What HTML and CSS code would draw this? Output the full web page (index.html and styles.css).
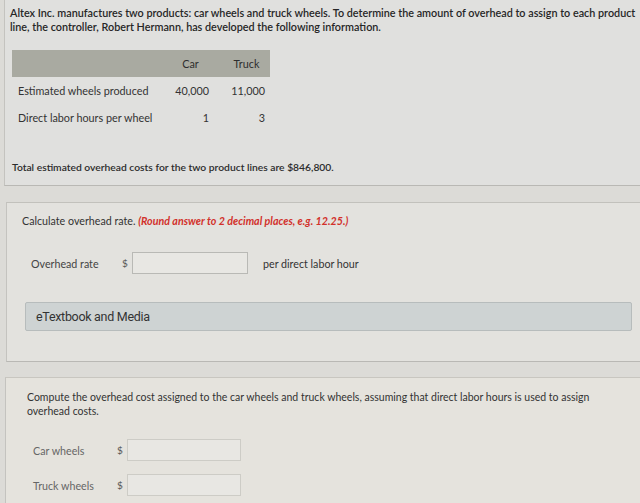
FILE: index.html
```html
<!DOCTYPE html>
<html>
<head>
<meta charset="utf-8">
<link rel="stylesheet" href="styles.css">
</head>
<body>
<div class="page">
  <section class="card card-info">
    <p class="intro">Altex Inc. manufactures two products: car wheels and truck wheels. To determine the amount of overhead to assign to each product line, the controller, Robert Hermann, has developed the following information.</p>
    <table class="data">
      <thead>
        <tr><th class="lbl"></th><th class="c-car">Car</th><th class="c-truck">Truck</th></tr>
      </thead>
      <tbody>
        <tr><td class="lbl">Estimated wheels produced</td><td class="n-car">40,000</td><td class="n-truck">11,000</td></tr>
        <tr><td class="lbl">Direct labor hours per wheel</td><td class="n-car">1</td><td class="n-truck">3</td></tr>
      </tbody>
    </table>
    <p class="total">Total estimated overhead costs for the two product lines are $846,800.</p>
  </section>

  <section class="card card-q1">
    <p class="question">Calculate overhead rate. <span class="hint">(Round answer to 2 decimal places, e.g. 12.25.)</span></p>
    <div class="answer-row row-rate">
      <span class="a-label label-rate">Overhead rate</span>
      <span class="dollar">$</span>
      <span class="input input-rate"></span>
      <span class="unit">per direct labor hour</span>
    </div>
    <div class="media-bar">eTextbook and Media</div>
  </section>

  <section class="card card-q2">
    <p class="question2">Compute the overhead cost assigned to the car wheels and truck wheels, assuming that direct labor hours is used to assign overhead costs.</p>
    <div class="answer-row row-car">
      <span class="a-label label-wheels">Car wheels</span>
      <span class="dollar">$</span>
      <span class="input input-wheels"></span>
    </div>
    <div class="answer-row row-truck">
      <span class="a-label label-wheels">Truck wheels</span>
      <span class="dollar">$</span>
      <span class="input input-wheels"></span>
    </div>
  </section>
</div>
</body>
</html>
```

FILE: styles.css
```css
html, body {
  margin: 0;
  padding: 0;
}
body {
  background: #dcdbd7;
  font-family: Lato, "Open Sans", Arial, sans-serif;
  color: #2a2a2a;
  width: 640px;
  height: 503px;
  overflow: hidden;
}
.page {
  display: flex;
  flex-direction: column;
}
.card {
  border-left: 1px solid #c4c3bf;
  border-bottom: 1px solid #b9b8b4;
}
.card-info {
  margin-left: 4px;
  background: #e0e0de;
  padding: 6px 0 11px 5px;
}
.intro {
  margin: 0;
  font-size: 10.8px;
  line-height: 14px;
  font-weight: 600;
  color: #262626;
}
.data {
  margin: 16px 0 0 2px;
  border-collapse: collapse;
  font-size: 10.8px;
  color: #333;
}
.data th {
  background: #a9aaa1;
  height: 27px;
  padding: 0;
  font-weight: 400;
  color: #2e2e2e;
}
.data td {
  height: 27px;
  padding: 0;
}
.data .lbl {
  width: 156px;
  padding-left: 6px;
  text-align: left;
  box-sizing: border-box;
}
.data .c-car {
  width: 45px;
  text-align: center;
}
.data .c-truck {
  width: 57px;
  text-align: center;
  padding-left: 10px;
  box-sizing: border-box;
}
.data .n-car {
  text-align: right;
  padding-right: 4px;
}
.data .n-truck {
  text-align: right;
  padding-right: 5px;
}
.total {
  margin: 29px 0 0 2px;
  font-size: 10.3px;
  line-height: 14px;
  font-weight: 600;
  color: #2c2c2c;
}
.card-q1 {
  margin: 16px 0 0 6px;
  border-top: 1px solid #c2c1bc;
  background: #e3e2de;
  padding: 11px 8px 30px 15px;
}
.question {
  margin: 0;
  font-size: 10.7px;
  line-height: 14px;
  color: #333;
}
.hint {
  color: #d2312b;
  font-weight: 700;
  font-style: italic;
}
.answer-row {
  display: flex;
  align-items: center;
  font-size: 10.7px;
  color: #444;
}
.row-rate {
  margin: 24px 0 0 9px;
}
.label-rate {
  width: 91px;
}
.dollar {
  width: 10px;
  font-size: 10px;
  color: #555;
}
.input {
  display: block;
  background: #e8e7e3;
  border: 1px solid #b9b9b5;
  box-sizing: border-box;
}
.input-rate {
  width: 116px;
  height: 22px;
}
.unit {
  margin-left: 15px;
  color: #333;
}
.media-bar {
  margin: 28px 0 0 3px;
  height: 29px;
  box-sizing: border-box;
  background: #ced3d3;
  border: 1px solid #b7bcbc;
  border-radius: 2px;
  padding: 0 10px;
  display: flex;
  align-items: center;
  font-family: Roboto, Arial, sans-serif;
  font-size: 12.5px;
  letter-spacing: -0.3px;
  color: #333;
}
.card-q2 {
  margin: 15px 0 0 5px;
  border-top: 1px solid #c8c6c0;
  border-bottom: none;
  background: #e5e3dd;
  padding: 13px 8px 30px 21px;
}
.question2 {
  margin: 0;
  font-size: 10.5px;
  line-height: 13.5px;
  color: #333;
}
.row-car {
  margin: 21px 0 0 6px;
}
.row-truck {
  margin: 13px 0 0 6px;
}
.label-wheels {
  width: 84px;
  color: #666;
}
.input-wheels {
  width: 114px;
  height: 22px;
  border-color: #cdccc6;
}
```
